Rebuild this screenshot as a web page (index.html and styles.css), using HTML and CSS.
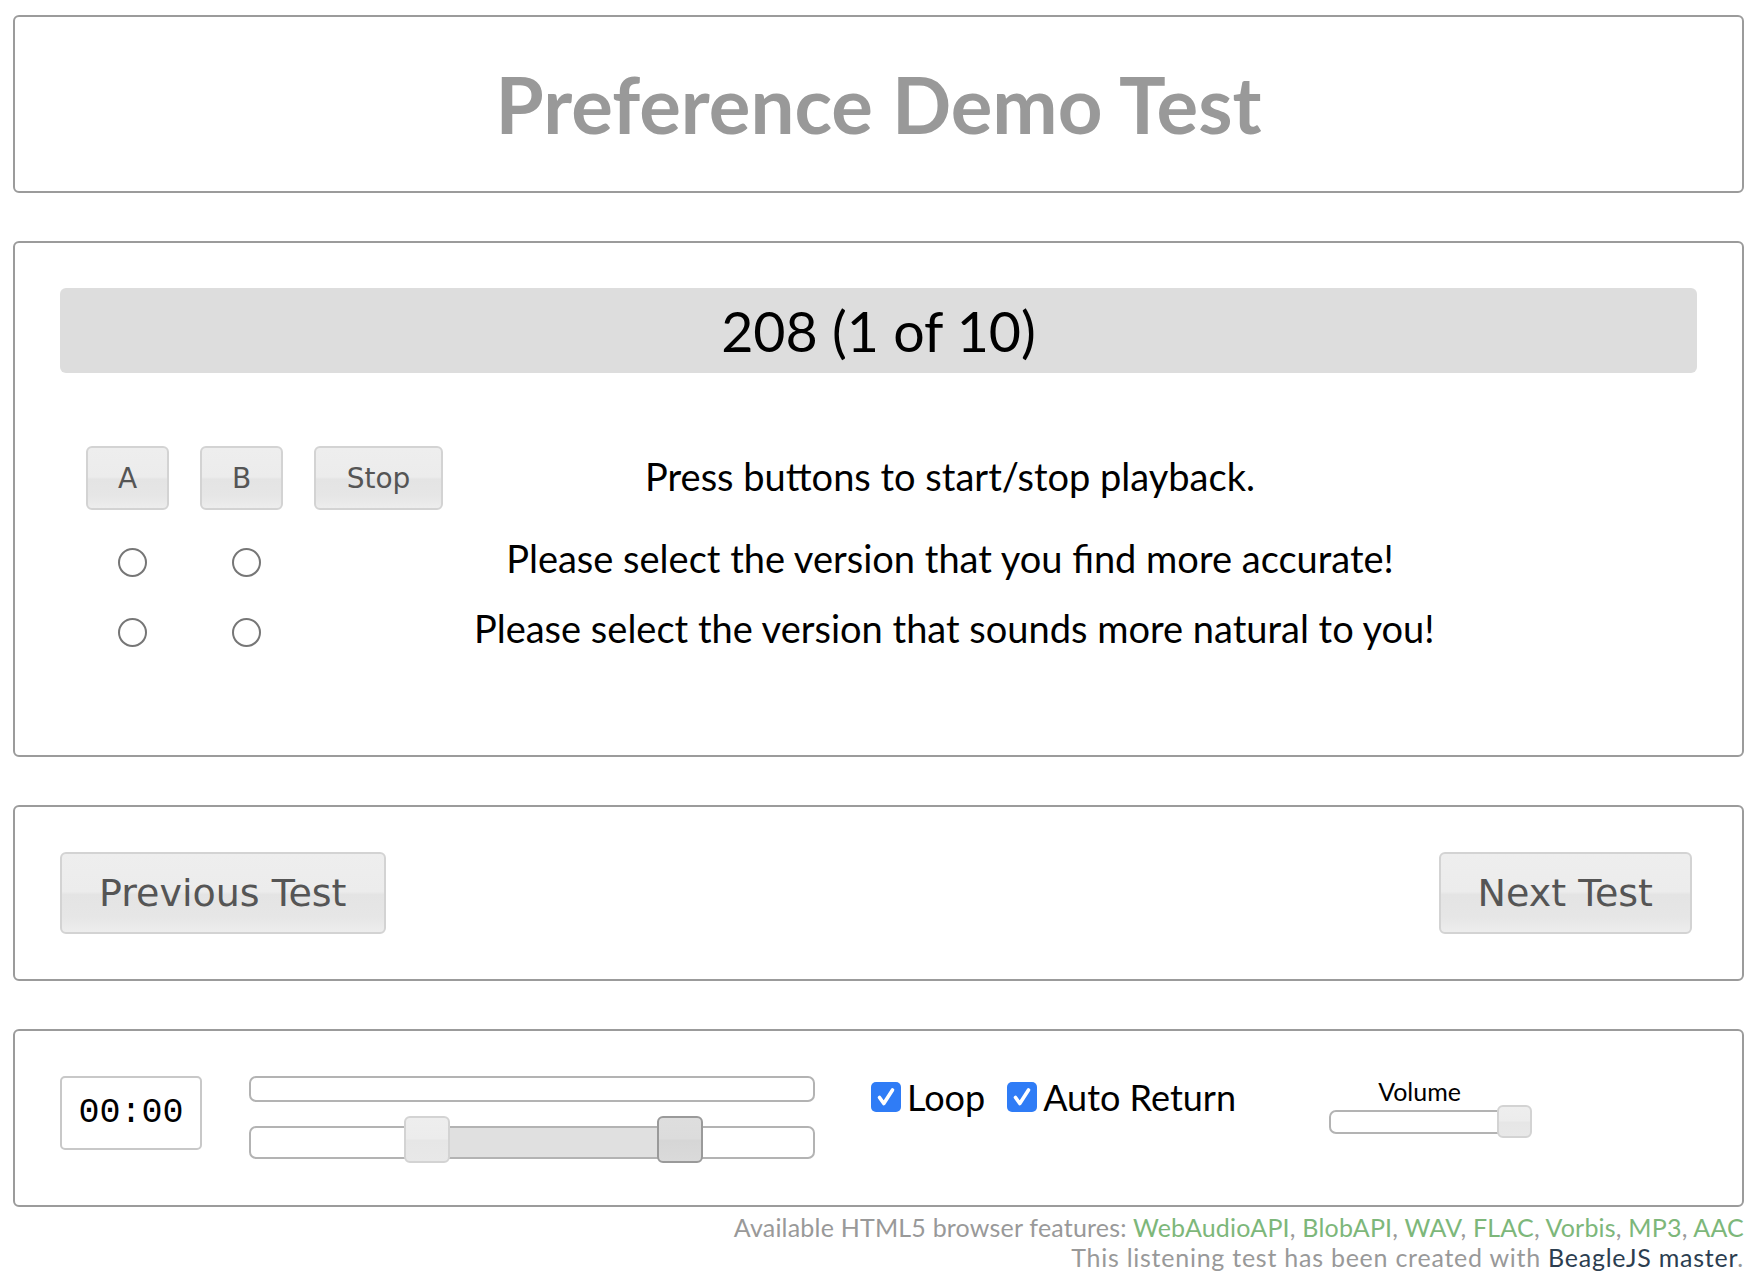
FILE: index.html
```html
<!DOCTYPE html>
<html lang="en">
<head>
<meta charset="utf-8">
<title>Preference Demo Test</title>
<link rel="stylesheet" href="styles.css">
</head>
<body>
<div class="page">
  <section class="panel panel-header">
    <h1 class="title">Preference Demo Test</h1>
  </section>

  <section class="panel panel-test">
    <div class="test-head">208 (1 of 10)</div>
    <div class="ab-table">
      <div class="ab-row ab-row-play">
        <button class="ui-btn btn-small">A</button>
        <button class="ui-btn btn-small">B</button>
        <button class="ui-btn btn-small">Stop</button>
        <div class="ab-text">Press buttons to start/stop playback.</div>
      </div>
      <div class="ab-row ab-row-q ab-row-first">
        <span class="radio"></span>
        <span class="radio"></span>
        <span></span>
        <div class="ab-text">Please select the version that you find more accurate!</div>
      </div>
      <div class="ab-row ab-row-q">
        <span class="radio"></span>
        <span class="radio"></span>
        <span></span>
        <div class="ab-text">Please select the version that sounds more natural to you!</div>
      </div>
    </div>
  </section>

  <section class="panel panel-nav">
    <button class="ui-btn btn-big">Previous Test</button>
    <button class="ui-btn btn-big btn-next">Next Test</button>
  </section>

  <section class="panel panel-controls">
    <div class="time">00:00</div>
    <div class="sliders">
      <div class="track track-pos"></div>
      <div class="track track-range">
        <div class="range-fill" style="left: 31.4%; width: 44.9%;"></div>
        <span class="handle" style="left: 31.4%;"></span>
        <span class="handle handle-active" style="left: 76.3%;"></span>
      </div>
    </div>
    <div class="checks">
      <label class="check">
        <span class="checkbox"><svg viewBox="0 0 30 30" width="30" height="30"><path d="M8.5 15.5 L12.8 21.5 L21.5 8" fill="none" stroke="#fff" stroke-width="3.6" stroke-linecap="round" stroke-linejoin="round"/></svg></span>
        <span class="check-text">Loop</span>
      </label>
      <label class="check check-second">
        <span class="checkbox"><svg viewBox="0 0 30 30" width="30" height="30"><path d="M8.5 15.5 L12.8 21.5 L21.5 8" fill="none" stroke="#fff" stroke-width="3.6" stroke-linecap="round" stroke-linejoin="round"/></svg></span>
        <span class="check-text">Auto Return</span>
      </label>
    </div>
    <div class="volume">
      <div class="volume-label">Volume</div>
      <div class="track track-volume">
        <span class="handle handle-volume" style="left: 100%;"></span>
      </div>
    </div>
  </section>

  <footer class="footer">
    <div class="footer-features">Available HTML5 browser features: <span class="feat">WebAudioAPI</span>, <span class="feat">BlobAPI</span>, <span class="feat">WAV</span>, <span class="feat">FLAC</span>, <span class="feat">Vorbis</span>, <span class="feat">MP3</span>, <span class="feat">AAC</span></div>
    <div class="footer-credit">This listening test has been created with <span class="beagle">BeagleJS master</span>.</div>
  </footer>
</div>
</body>
</html>
```

FILE: styles.css
```css
* { box-sizing: border-box; }

html, body {
  margin: 0;
  background: #fff;
}

body {
  font-family: Lato, "Noto Sans", sans-serif;
  color: #000;
}

.page {
  padding: 15px 14px 0 13px;
}

.panel {
  border: 2px solid #9b9b9b;
  border-radius: 6px;
  padding: 45px;
  margin-bottom: 48px;
}

/* header */
.panel-header { height: 178px; }

.title {
  margin: 0;
  text-align: center;
  font-size: 78px;
  line-height: 84px;
  font-weight: 700;
  color: #999;
}

/* test panel */
.panel-test { height: 516px; }

.test-head {
  height: 85px;
  background: #ddd;
  border-radius: 6px;
  text-align: center;
  font-size: 55.5px;
  line-height: 85px;
  margin-bottom: 73px;
}

.ab-table { margin-left: 26px; }

.ab-row {
  display: grid;
  grid-template-columns: 83px 83px 129px 952px;
  column-gap: 31px;
  align-items: center;
}

.ab-row-play { height: 64px; }
.ab-row-q { height: 70px; }
.ab-row-first { margin-top: 17px; }

.ab-text {
  text-align: center;
  font-size: 38px;
  white-space: nowrap;
  margin-top: -8px;
}

.ab-row-play .ab-text { margin-top: -4px; }

.radio {
  width: 29px;
  height: 29px;
  border: 2px solid #767676;
  border-radius: 50%;
  background: #fff;
  justify-self: center;
  margin-left: 10px;
}

/* jQuery-UI like buttons */
.ui-btn {
  font-family: "DejaVu Sans", Verdana, sans-serif;
  color: #555;
  border: 2px solid #d3d3d3;
  border-radius: 6px;
  background: linear-gradient(to bottom, #eeeeee 0%, #ececec 48%, #e4e4e4 52%, #e6e6e6 80%, #ededed 100%);
  padding: 0;
  margin: 0;
}

.btn-small {
  height: 64px;
  width: 100%;
  font-size: 28px;
}

.panel-nav {
  height: 176px;
  display: flex;
  justify-content: space-between;
  align-items: center;
}

.btn-big {
  height: 82px;
  font-size: 38px;
  padding: 0 37px;
}

.btn-next { margin-right: 5px; }

/* controls */
.panel-controls {
  height: 178px;
  display: flex;
  align-items: flex-start;
  margin-bottom: 5px;
}

.time {
  width: 142px;
  height: 74px;
  border: 2px solid #c8c8c8;
  border-radius: 5px;
  font-family: "Liberation Mono", "DejaVu Sans Mono", monospace;
  font-size: 35px;
  display: flex;
  align-items: center;
  justify-content: center;
}

.sliders {
  width: 566px;
  margin-left: 47px;
}

.track {
  position: relative;
  border: 2px solid #b3b3b3;
  border-radius: 7px;
  background: #fff;
}

.track-pos { height: 26px; }

.track-range {
  height: 33px;
  margin-top: 24px;
}

.range-fill {
  position: absolute;
  top: 0;
  bottom: 0;
  background: #e0e0e0;
}

.handle {
  position: absolute;
  top: -12px;
  width: 46px;
  height: 47px;
  margin-left: -23px;
  border: 2px solid #d3d3d3;
  border-radius: 6px;
  background: linear-gradient(to bottom, #eeeeee 0%, #ececec 48%, #e6e6e6 52%, #e8e8e8 100%);
}

.handle-active {
  border-color: #9a9a9a;
  background: linear-gradient(to bottom, #dedede 0%, #dcdcdc 48%, #d6d6d6 52%, #dadada 100%);
}

.checks {
  display: flex;
  align-items: center;
  height: 40px;
  margin-top: 1px;
  margin-left: 56px;
}

.check {
  display: flex;
  align-items: center;
  font-size: 36px;
  line-height: 40px;
}

.check-second { margin-left: 22px; }

.checkbox {
  width: 30px;
  height: 30px;
  border-radius: 5px;
  background: #2f7cf6;
  display: flex;
  margin-right: 6px;
}

.volume {
  width: 187px;
  margin-left: 93px;
  margin-top: 1px;
}

.volume-label {
  text-align: center;
  font-size: 25px;
  line-height: 28px;
  padding-right: 6px;
}

.track-volume {
  height: 24px;
  margin-top: 5px;
}

.handle-volume {
  top: -7px;
  width: 35px;
  height: 33px;
  margin-left: -17px;
}

/* footer */
.footer {
  text-align: right;
  font-size: 25px;
  line-height: 30px;
  color: #999;
}

.footer-features { letter-spacing: 0.2px; }
.footer-credit { letter-spacing: 0.75px; }

.feat { color: #7db77a; }
.beagle { color: #2c3e50; }
```
